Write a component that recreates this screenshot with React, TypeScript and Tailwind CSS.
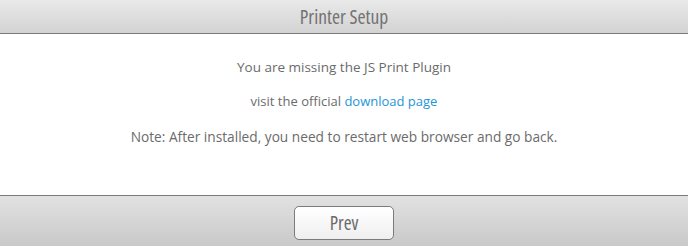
export default function App() {
  return (
    <div className="flex h-[246px] w-[688px] flex-col overflow-hidden bg-white font-['Open_Sans',sans-serif]">
      <div className="flex h-[34px] shrink-0 items-center justify-center border-b border-[#7a7a7a] bg-gradient-to-b from-[#e9e9e9] to-[#d3d3d3]">
        <span className="text-[19.5px] leading-[24px] text-[#727272] font-stretch-semi-condensed">Printer Setup</span>
      </div>
      <div className="flex h-[161px] shrink-0 flex-col items-center text-[#6b6b6b]">
        <p className="mt-[24px] text-[13.5px] leading-[18px]">You are missing the JS Print Plugin</p>
        <p className="mt-[17px] text-[13px] leading-[16px]">
          visit the official <a className="text-[#1e95d6]">download page</a>
        </p>
        <p className="mt-[19px] text-[13.7px] leading-[18px]">
          Note: After installed, you need to restart web browser and go back.
        </p>
      </div>
      <div className="flex flex-1 justify-center border-t border-[#7a7a7a] bg-gradient-to-b from-[#e2e2e2] to-[#c9c9c9] pt-[10px]">
        <button className="h-[34px] w-[100px] rounded-[5px] border border-[#7b7b7b] bg-gradient-to-b from-white to-[#efefef] text-[19px] leading-[24px] text-[#6a6a6a] font-stretch-semi-condensed">
          Prev
        </button>
      </div>
    </div>
  );
}
